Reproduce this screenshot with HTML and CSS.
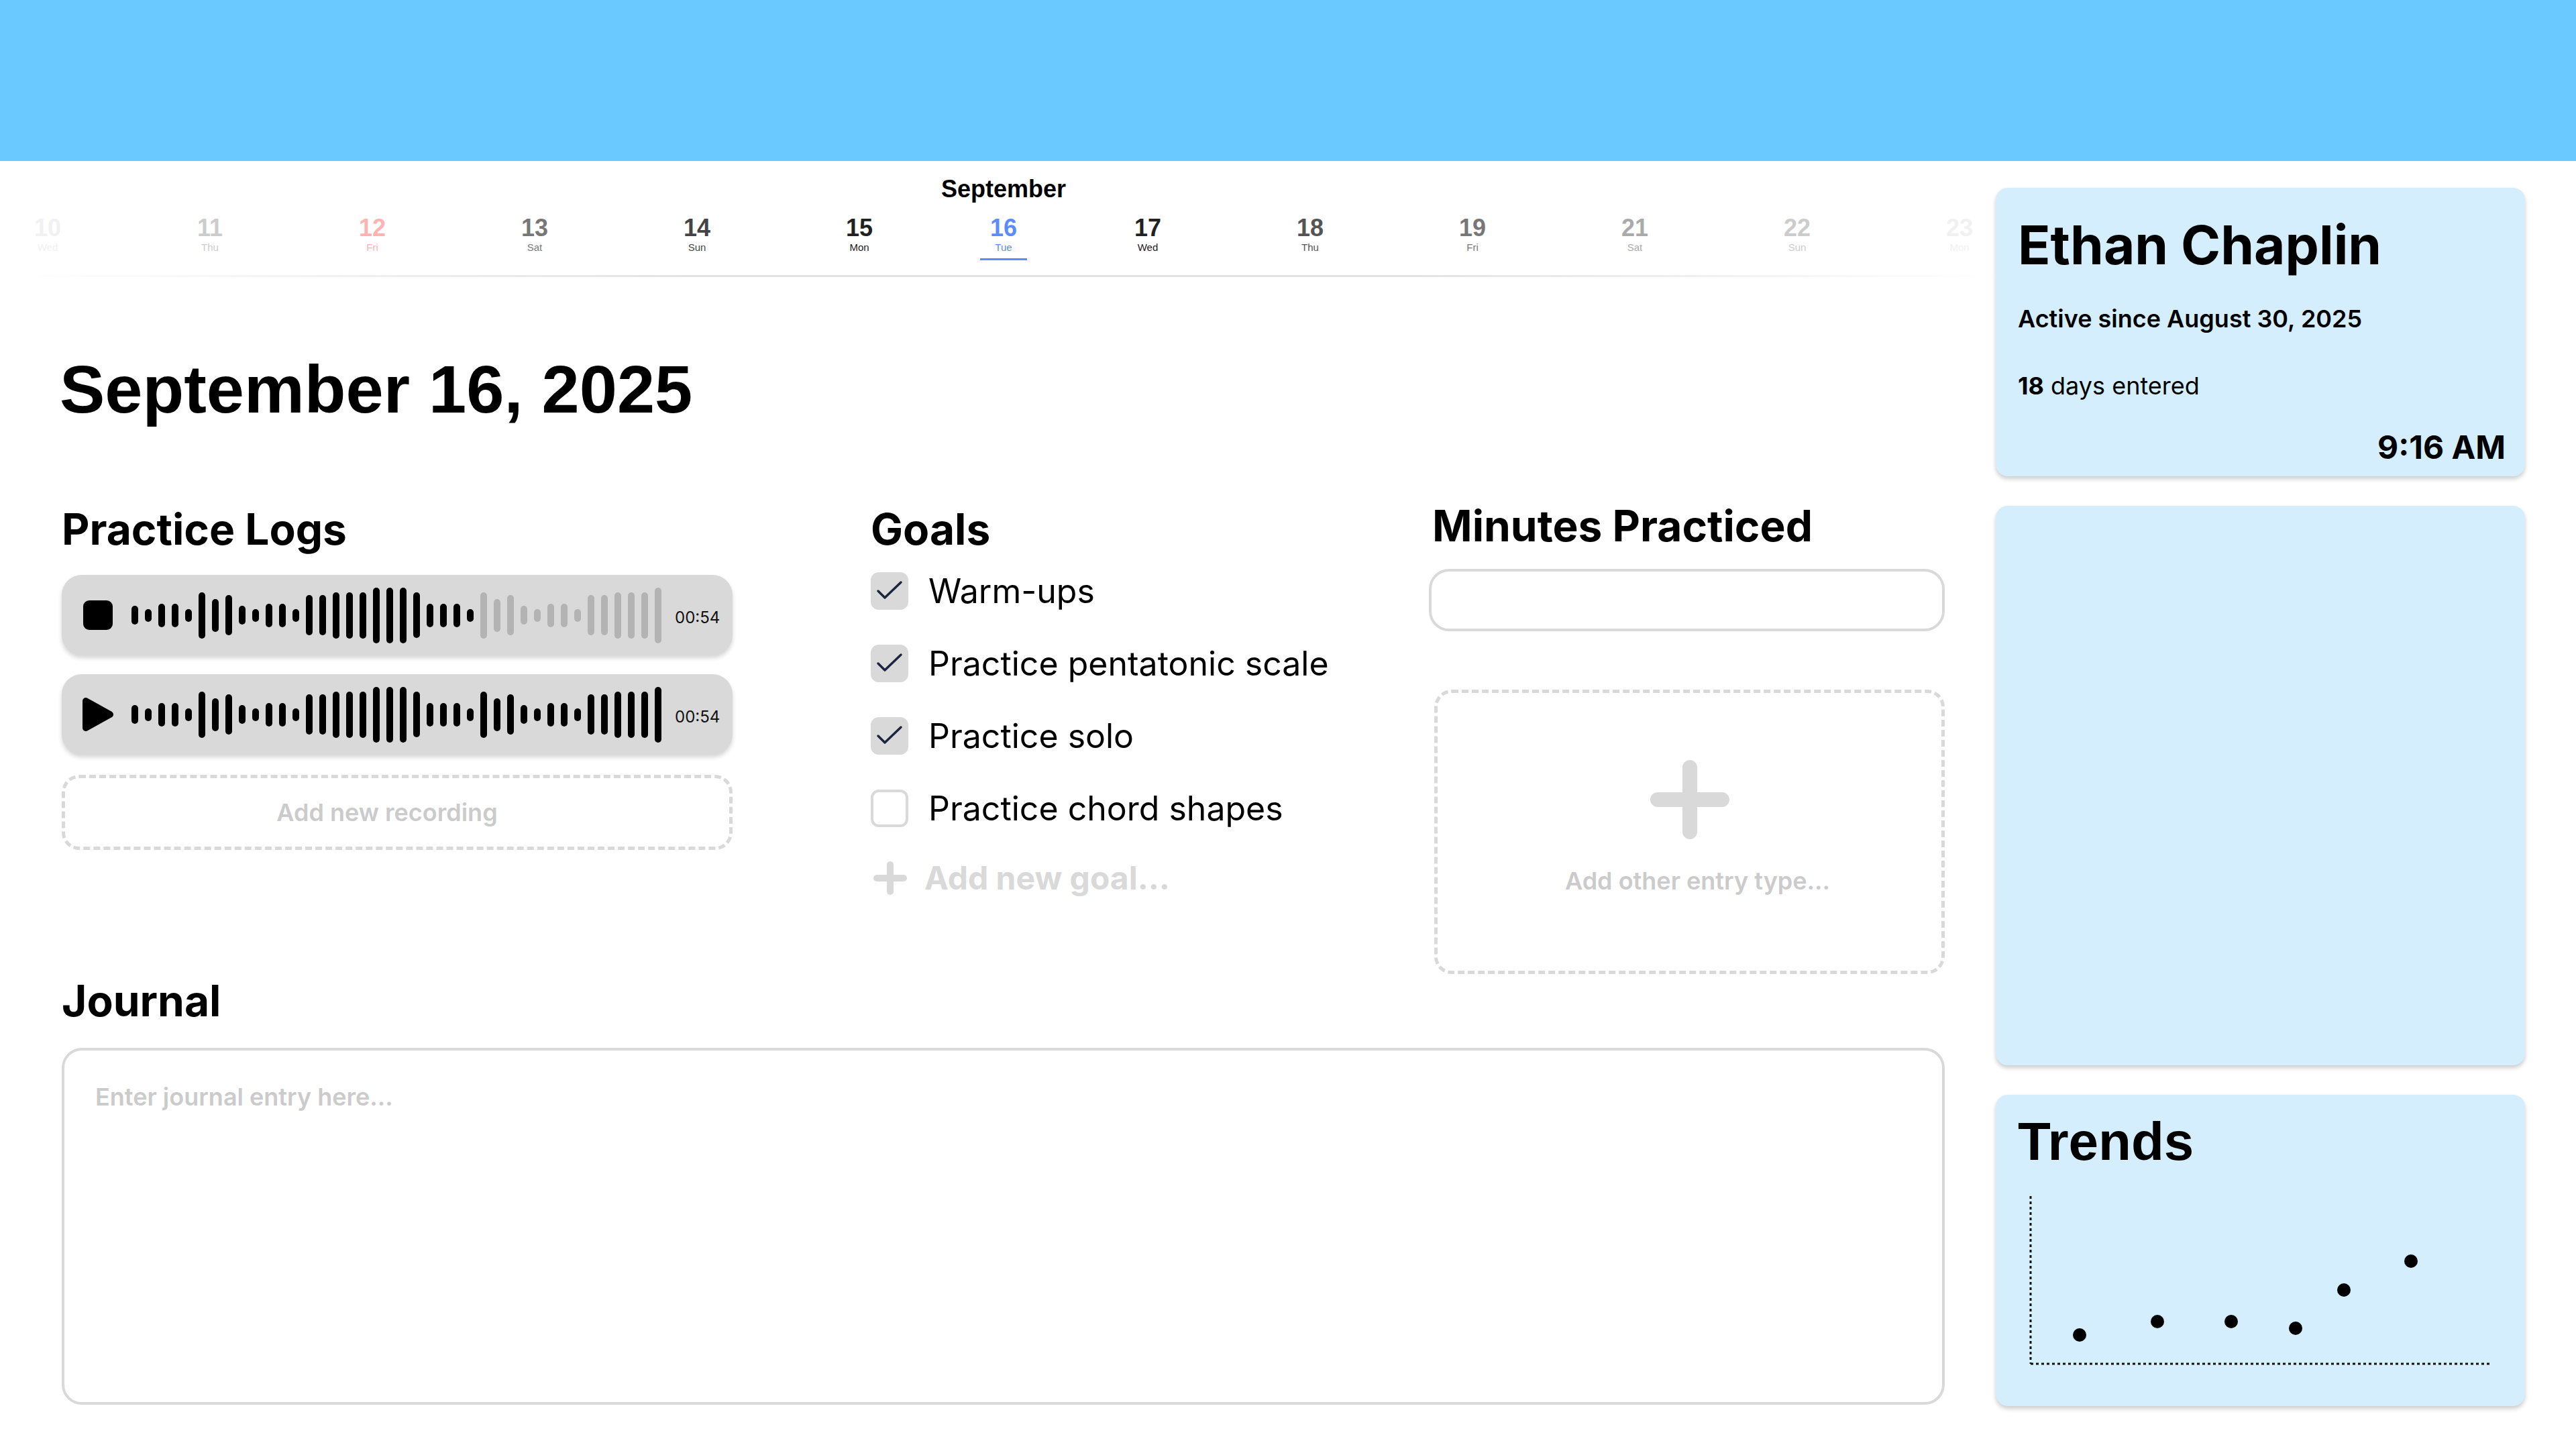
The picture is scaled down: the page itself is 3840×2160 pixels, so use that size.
FILE: index.html
```html
<!DOCTYPE html>
<html lang="en">
<head>
<meta charset="utf-8">
<title>Practice Journal</title>
<link rel="stylesheet" href="styles.css">
</head>
<body>
<header class="topbar"></header>
<div class="page">
  <main class="main">
    <section class="calendar">
      <div class="month">September</div>
      <div class="days">
        <div class="day t10"><span class="num">10</span><span class="dow">Wed</span></div>
        <div class="day t11"><span class="num">11</span><span class="dow">Thu</span></div>
        <div class="day t12"><span class="num">12</span><span class="dow">Fri</span></div>
        <div class="day t13"><span class="num">13</span><span class="dow">Sat</span></div>
        <div class="day t14"><span class="num">14</span><span class="dow">Sun</span></div>
        <div class="day t15"><span class="num">15</span><span class="dow">Mon</span></div>
        <div class="day selected"><span class="num">16</span><span class="dow">Tue</span><span class="underline"></span></div>
        <div class="day t15"><span class="num">17</span><span class="dow">Wed</span></div>
        <div class="day t18"><span class="num">18</span><span class="dow">Thu</span></div>
        <div class="day t13"><span class="num">19</span><span class="dow">Fri</span></div>
        <div class="day t21"><span class="num">21</span><span class="dow">Sat</span></div>
        <div class="day t11"><span class="num">22</span><span class="dow">Sun</span></div>
        <div class="day t10"><span class="num">23</span><span class="dow">Mon</span></div>
      </div>
      <div class="divider"></div>
    </section>

    <div class="content">
      <h1 class="date">September 16, 2025</h1>
      <div class="columns">
        <section class="logs">
          <h2 class="heading">Practice Logs</h2>
          <div class="recording">
            <div class="rec-icon"><span class="stop"></span></div>
            <div class="wave" id="wave1"></div>
            <span class="time">00:54</span>
          </div>
          <div class="recording">
            <div class="rec-icon">
              <svg class="play" width="48" height="52" viewBox="0 0 48 52"><polygon points="6,6 42,26 6,46" fill="#000" stroke="#000" stroke-width="10" stroke-linejoin="round"/></svg>
            </div>
            <div class="wave" id="wave2"></div>
            <span class="time">00:54</span>
          </div>
          <div class="add-recording">Add new recording</div>
        </section>

        <section class="goals">
          <h2 class="heading">Goals</h2>
          <ul class="goal-list">
            <li class="goal"><span class="box checked"><svg width="56" height="56" viewBox="0 0 56 56"><polyline points="11,28 21,38 45,15" fill="none" stroke="#1c2540" stroke-width="3.5" stroke-linecap="round" stroke-linejoin="round"/></svg></span><span class="goal-text">Warm-ups</span></li>
            <li class="goal"><span class="box checked"><svg width="56" height="56" viewBox="0 0 56 56"><polyline points="11,28 21,38 45,15" fill="none" stroke="#1c2540" stroke-width="3.5" stroke-linecap="round" stroke-linejoin="round"/></svg></span><span class="goal-text">Practice pentatonic scale</span></li>
            <li class="goal"><span class="box checked"><svg width="56" height="56" viewBox="0 0 56 56"><polyline points="11,28 21,38 45,15" fill="none" stroke="#1c2540" stroke-width="3.5" stroke-linecap="round" stroke-linejoin="round"/></svg></span><span class="goal-text">Practice solo</span></li>
            <li class="goal"><span class="box"></span><span class="goal-text">Practice chord shapes</span></li>
            <li class="goal add-goal"><svg class="small-plus" width="50" height="50" viewBox="0 0 50 50"><line x1="5" y1="25" x2="45" y2="25" stroke="#d9d9d9" stroke-width="10" stroke-linecap="round"/><line x1="25" y1="5" x2="25" y2="45" stroke="#d9d9d9" stroke-width="10" stroke-linecap="round"/></svg><span class="add-goal-text">Add new goal...</span></li>
          </ul>
        </section>

        <section class="minutes">
          <h2 class="heading minutes-heading">Minutes Practiced</h2>
          <div class="minutes-input"></div>
          <div class="add-entry">
            <svg width="118" height="118" viewBox="0 0 118 118"><line x1="11" y1="59" x2="107" y2="59" stroke="#d9d9d9" stroke-width="22" stroke-linecap="round"/><line x1="59" y1="11" x2="59" y2="107" stroke="#d9d9d9" stroke-width="22" stroke-linecap="round"/></svg>
            <span class="add-entry-text">Add other entry type...</span>
          </div>
        </section>
      </div>

      <section class="journal">
        <h2 class="heading">Journal</h2>
        <div class="journal-box"><span class="placeholder">Enter journal entry here...</span></div>
      </section>
    </div>
  </main>

  <aside class="sidebar">
    <div class="card profile">
      <div class="name">Ethan Chaplin</div>
      <div class="since">Active since August 30, 2025</div>
      <div class="entered"><b>18</b> days entered</div>
      <div class="clock">9:16 AM</div>
    </div>
    <div class="card blank"></div>
    <div class="card trends">
      <div class="trends-title">Trends</div>
      <svg class="chart" width="710" height="260" viewBox="0 0 710 260">
        <line x1="17" y1="3" x2="17" y2="253" stroke="#111" stroke-width="3" stroke-dasharray="4 4"/>
        <line x1="17" y1="253" x2="702" y2="253" stroke="#111" stroke-width="3" stroke-dasharray="4 4"/>
        <circle cx="90" cy="210" r="10" fill="#000"/>
        <circle cx="206" cy="190" r="10" fill="#000"/>
        <circle cx="316" cy="190" r="10" fill="#000"/>
        <circle cx="412" cy="200" r="10" fill="#000"/>
        <circle cx="484" cy="143" r="10" fill="#000"/>
        <circle cx="584" cy="100" r="10" fill="#000"/>
      </svg>
    </div>
  </aside>
</div>
<script src="app.js"></script>
</body>
</html>
```

FILE: app.js
```js
(function () {
  var heights = [28,19,35,35,19,69,49,60,28,19,35,35,19,60,60,69,69,69,83,83,83,68,35,35,35,19,69,49,60,28,19,35,35,19,60,60,69,69,69,83];
  function build(id, dimFrom) {
    var el = document.getElementById(id);
    heights.forEach(function (h, i) {
      var b = document.createElement('span');
      b.className = 'bar' + (dimFrom && i >= dimFrom ? ' dim' : '');
      b.style.height = h + 'px';
      el.appendChild(b);
    });
  }
  build('wave1', 26);
  build('wave2', 0);
})();
```

FILE: styles.css
```css
* { box-sizing: border-box; }
html, body { margin: 0; padding: 0; }
body {
  width: 3840px;
  height: 2160px;
  overflow: hidden;
  background: #fff;
  font-family: "Inter", "Noto Sans", sans-serif;
  color: #000;
}
.topbar { height: 240px; background: #6ac9ff; }

.page {
  display: grid;
  grid-template-columns: 1fr 789px;
  padding-right: 76px;
  height: 1920px;
}
.main { min-width: 0; }

/* calendar strip */
.calendar { padding: 21px 0 0 17px; }
.month {
  font: 700 36px/41px "Liberation Sans", Arial, sans-serif;
  text-align: center;
}
.days {
  display: flex;
  justify-content: center;
  margin-top: 17px;
  overflow: hidden;
  height: 69px;
}
.day {
  flex: 0 0 242px;
  display: flex;
  flex-direction: column;
  align-items: center;
  font-family: "Liberation Sans", Arial, sans-serif;
}
.day.selected { flex-basis: 188px; color: #5b8cff; }
.num { font-size: 36px; line-height: 41px; font-weight: 700; }
.dow { font-size: 15px; line-height: 17px; }
.underline { width: 70px; height: 3px; margin-top: 8px; background: #5b8cff; }
.t10 { color: #f1f1f1; }
.t11 { color: #cccccc; }
.t12 { color: #ffb3b3; }
.t13 { color: #777777; }
.t14 { color: #444444; }
.t15 { color: #222222; }
.t18 { color: #555555; }
.t21 { color: #aaaaaa; }
.divider {
  height: 3px;
  margin-top: 22px;
  background: linear-gradient(90deg, rgba(226,226,226,0) 0%, #e2e2e2 35%, #e2e2e2 70%, rgba(226,226,226,0) 100%);
}

/* content */
.content { padding: 0 76px 0 92px; }
.date {
  margin: 109px 0 0 -3px;
  font: 700 101px/116px "Liberation Sans", Arial, sans-serif;
}
.columns {
  display: flex;
  align-items: flex-start;
  margin-top: 112px;
}
.heading {
  margin: 0;
  font: 700 64px/77px "Inter", sans-serif;
}

/* practice logs */
.logs { width: 1000px; margin-right: 206px; display: flex; flex-direction: column; }
.recording {
  height: 120px;
  margin-top: 28px;
  border-radius: 30px;
  background: #d9d9d9;
  box-shadow: 0 4px 6px rgba(0,0,0,0.16);
  display: flex;
  align-items: center;
  padding-left: 30px;
}
.logs .heading + .recording { margin-top: 30px; }
.rec-icon { width: 48px; height: 52px; display: flex; align-items: center; justify-content: center; }
.stop { width: 44px; height: 44px; border-radius: 9px; background: #000; }
.play { display: block; }
.wave { display: flex; align-items: center; gap: 10px; margin-left: 26px; }
.bar { width: 10px; border-radius: 5px; background: #000; }
.bar.dim { background: #b3b3b3; }
.time { margin-left: 20px; font: 400 24px/29px "Inter", sans-serif; color: #111; padding-top: 6px; }
.add-recording {
  margin-top: 30px;
  height: 112px;
  border: 5px dashed #d9d9d9;
  border-radius: 26px;
  display: flex;
  align-items: center;
  justify-content: center;
  padding-right: 30px;
  font: 600 36px/44px "Inter", sans-serif;
  color: #cbcbcb;
}

/* goals */
.goals { flex: 1; min-width: 0; }
.goal-list { list-style: none; margin: 26px 0 0; padding: 0; display: flex; flex-direction: column; gap: 52px; }
.goal { height: 56px; display: flex; align-items: center; }
.box {
  flex: 0 0 56px;
  width: 56px;
  height: 56px;
  border-radius: 12px;
  border: 4px solid #d9d9d9;
  background: #fff;
  position: relative;
}
.box.checked { background: #d9d9d9; }
.box svg { position: absolute; left: -4px; top: -4px; }
.goal-text { margin-left: 30px; font: 400 50px/60px "Inter", sans-serif; white-space: nowrap; }
.add-goal { margin-top: -4px; }
.small-plus { margin-left: 4px; flex: 0 0 50px; }
.add-goal-text { margin-left: 26px; font: 700 48px/58px "Inter", sans-serif; color: #d9d9d9; white-space: nowrap; }

/* minutes */
.minutes { width: 769px; display: flex; flex-direction: column; }
.minutes-heading { margin-top: -5px; padding-left: 5px; }
.minutes-input {
  margin-top: 26px;
  height: 93px;
  border: 4px solid #d9d9d9;
  border-radius: 30px;
}
.add-entry {
  margin: 87px 0 0 8px;
  height: 424px;
  border: 5px dashed #d9d9d9;
  border-radius: 26px;
  display: flex;
  flex-direction: column;
  align-items: center;
  justify-content: center;
  gap: 40px;
  padding-bottom: 12px;
}
.add-entry-text { font: 600 36px/44px "Inter", sans-serif; color: #cbcbcb; padding-left: 24px; }

/* journal */
.journal { margin-top: 1px; }
.journal-box {
  margin-top: 32px;
  height: 532px;
  border: 4px solid #d9d9d9;
  border-radius: 30px;
  padding: 47px 46px;
}
.placeholder { font: 600 36px/44px "Inter", sans-serif; color: #cbcbcb; }

/* sidebar */
.sidebar {
  display: flex;
  flex-direction: column;
  gap: 44px;
  padding: 40px 0 64px;
}
.card {
  background: #d4eefd;
  border-radius: 18px;
  box-shadow: 0 4px 6px rgba(0,0,0,0.2);
}
.profile {
  height: 430px;
  padding: 36px 29px 14px 33px;
  display: flex;
  flex-direction: column;
}
.name { font: 700 80px/97px "Inter", sans-serif; }
.since { margin-top: 40px; font: 600 36px/44px "Inter", sans-serif; }
.entered { margin-top: 56px; font: 400 36px/44px "Inter", sans-serif; }
.entered b { font-weight: 700; }
.clock { margin-top: auto; text-align: right; font: 700 48px/58px "Inter", sans-serif; }
.blank { flex: 1; }
.trends { height: 464px; padding: 24px 33px; }
.trends-title { font: 700 80px/92px "Liberation Sans", Arial, sans-serif; }
.chart { display: block; margin: 32px 0 0 2px; }
```
